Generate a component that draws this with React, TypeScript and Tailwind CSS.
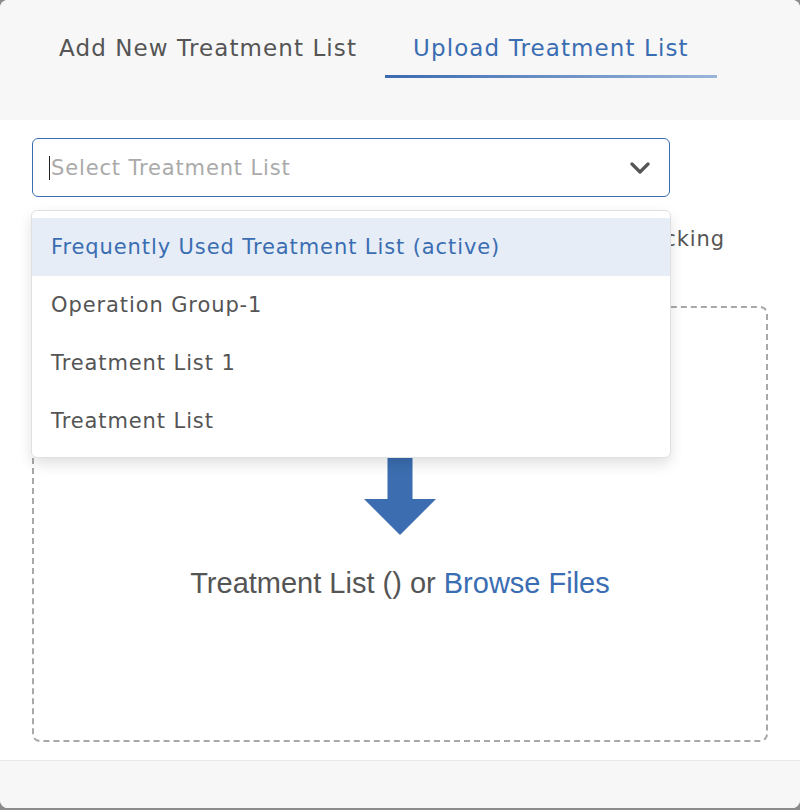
import React from 'react';

const options = [
  'Frequently Used Treatment List (active)',
  'Operation Group-1',
  'Treatment List 1',
  'Treatment List',
];

export default function App() {
  return (
    <div className="w-[800px] h-[810px] bg-[#8c8c8c]">
      <div className="h-[808px] rounded-lg bg-white flex flex-col overflow-hidden font-['DejaVu_Sans',sans-serif]">
        {/* tabs */}
        <div className="h-[120px] bg-[#f7f7f7] flex items-start pt-[33px] pl-[31px] shrink-0">
          <div className="px-[28px] flex flex-col">
            <span className="text-[23px] tracking-[1.1px] leading-[30px] text-[#555] whitespace-nowrap">Add New Treatment List</span>
            <div className="mt-[12px] h-[3px]" />
          </div>
          <div className="px-[28px] flex flex-col relative">
            <span className="text-[23px] tracking-[1.1px] leading-[30px] text-[#3a6db2] whitespace-nowrap">Upload Treatment List</span>
            <div className="mt-[12px] h-[3px] -mx-[28px] bg-gradient-to-r from-[#3a6ab0] to-[#9bb5d9]" />
          </div>
        </div>

        {/* body */}
        <div className="flex-1 relative px-[32px] pt-[18px] pb-[18px] flex flex-col">
          <div className="w-[638px] h-[59px] border border-[#3a6db2] rounded-md flex items-center pl-[16px] pr-[18px]">
            <span className="w-px h-[24px] bg-[#222]" />
            <span className="ml-px pt-[2px] text-[21px] tracking-[0.85px] text-[#aaa] flex-1">Select Treatment List</span>
            <svg width="20" height="12" viewBox="0 0 20 12" className="mr-[1px]">
              <polyline points="2,2 10,10 18,2" fill="none" stroke="#555" strokeWidth="3.2" strokeLinecap="round" strokeLinejoin="round" />
            </svg>
          </div>

          <div className="h-[56px] mt-[15px] flex items-center justify-end pr-[43px] overflow-hidden">
            <span className="text-[21px] tracking-[0.9px] text-[#555] whitespace-nowrap">for tracking</span>
          </div>

          <div className="flex-1 mt-[38px] border-2 border-dashed border-[#a8a8a8] rounded-lg flex flex-col items-center pt-[99px]">
            <svg width="72" height="128" viewBox="0 0 72 128">
              <rect x="23.5" y="0" width="25" height="93" fill="#3b6db0" />
              <polygon points="0,92 72,92 36,128" fill="#3b6db0" />
            </svg>
            <p className="mt-[30px] text-[29px] leading-[36px] text-[#555] font-['Liberation_Sans',Arial,sans-serif]">
              Treatment List () or <span className="text-[#3a6db2]">Browse Files</span>
            </p>
          </div>

          {/* dropdown */}
          <div className="absolute left-[31px] top-[90px] w-[640px] bg-white border border-[#e0e0e0] rounded-md shadow-[0_6px_14px_rgba(0,0,0,0.12)] py-[7px]">
            {options.map((o, i) => (
              <div
                key={o}
                className={
                  i === 0
                    ? 'h-[58px] flex items-center pl-[19px] pt-[2px] bg-[#e6edf6] text-[#3a6db2] text-[21px] tracking-[0.9px]'
                    : 'h-[58px] flex items-center pl-[19px] pt-[2px] text-[#555] text-[21px] tracking-[0.9px]'
                }
              >
                {o}
              </div>
            ))}
          </div>
        </div>

        {/* footer */}
        <div className="h-[48px] bg-[#f7f7f7] border-t border-[#eaeaea] shrink-0" />
      </div>
    </div>
  );
}
